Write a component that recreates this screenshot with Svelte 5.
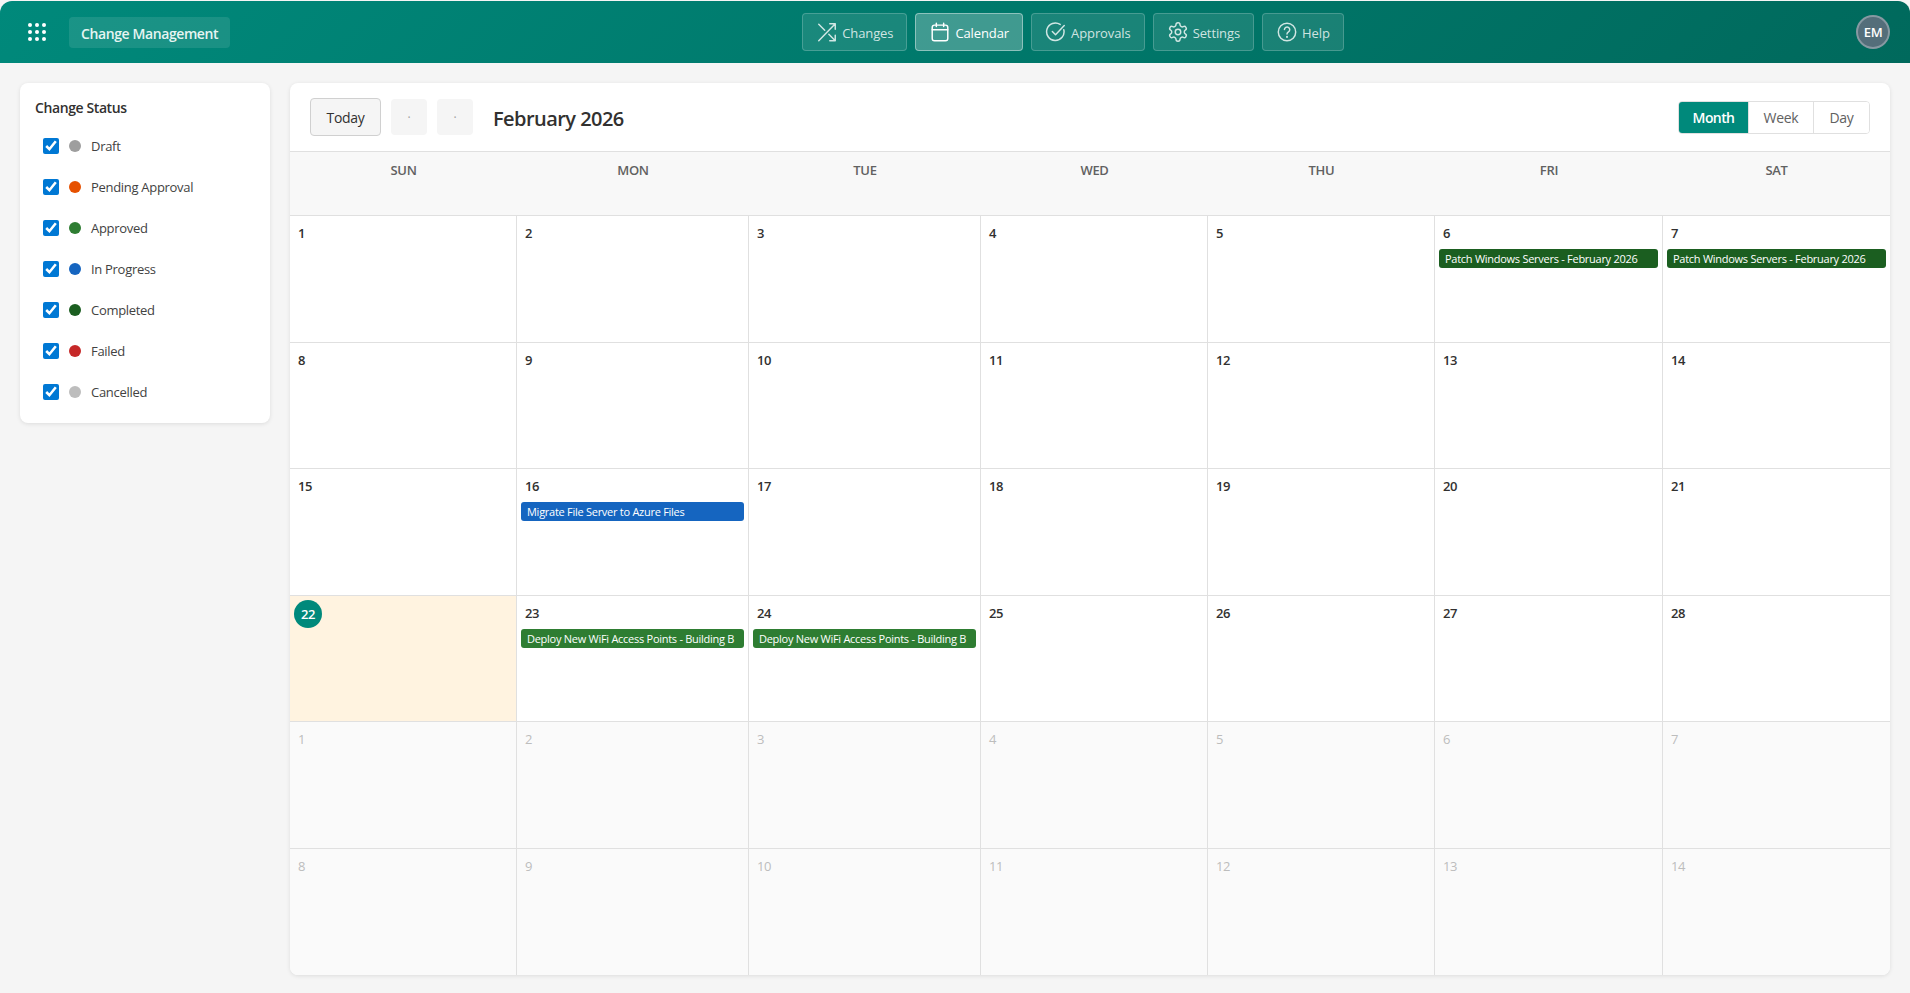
<script>
  const nav = [
    { label: "Changes", icon: "shuffle" },
    { label: "Calendar", icon: "calendar", active: true },
    { label: "Approvals", icon: "check" },
    { label: "Settings", icon: "gear" },
    { label: "Help", icon: "help" },
  ];

  const statuses = [
    { label: "Draft", color: "#9e9e9e" },
    { label: "Pending Approval", color: "#e65100" },
    { label: "Approved", color: "#2e7d32" },
    { label: "In Progress", color: "#1565c0" },
    { label: "Completed", color: "#1b5e20" },
    { label: "Failed", color: "#c62828" },
    { label: "Cancelled", color: "#bdbdbd" },
  ];

  const days = ["SUN", "MON", "TUE", "WED", "THU", "FRI", "SAT"];

  const patch = { title: "Patch Windows Servers - February 2026", color: "#1b5e20" };
  const wifi = { title: "Deploy New WiFi Access Points - Building B", color: "#2e7d32" };
  const migrate = { title: "Migrate File Server to Azure Files", color: "#1565c0" };
  const events = { 6: patch, 7: patch, 16: migrate, 23: wifi, 24: wifi };

  const cells = [];
  for (let d = 1; d <= 28; d++) cells.push({ day: d, event: events[d], today: d === 22 });
  for (let d = 1; d <= 14; d++) cells.push({ day: d, other: true });
</script>

<div class="app">
  <header class="topbar">
    <button class="waffle" aria-label="Apps">
      <svg width="18" height="18" viewBox="0 0 18 18" fill="#fff">
        {#each [2, 9, 16] as y}
          {#each [2, 9, 16] as x}
            <circle cx={x} cy={y} r="2" />
          {/each}
        {/each}
      </svg>
    </button>
    <div class="brand">Change Management</div>

    <nav class="nav">
      {#each nav as item}
        <button class="nav-btn" class:active={item.active}>
          <svg width="22" height="22" viewBox="0 0 24 24" fill="none" stroke="currentColor" stroke-width="1.6" stroke-linecap="round" stroke-linejoin="round">
            {#if item.icon === "shuffle"}
              <path d="M3 3.5 L9.5 10 M14 14.5 L21 21.5 M21 15.5 V21.5 H15 M3 21.5 L21 3 M15 3 H21 V9" />
            {:else if item.icon === "calendar"}
              <rect x="3.5" y="4.5" width="17" height="17" rx="2.5" />
              <path d="M3.5 9.5 H20.5 M8 2.5 V6 M16 2.5 V6" />
            {:else if item.icon === "check"}
              <path d="M20.5 9.5 A9.5 9.5 0 1 1 16.5 3.8" />
              <path d="M8 11.5 L11.5 15 L21 5" />
            {:else if item.icon === "gear"}
              <circle cx="12" cy="12" r="3" />
              <path d="M12.22 2h-.44a2 2 0 0 0-2 2v.18a2 2 0 0 1-1 1.73l-.43.25a2 2 0 0 1-2 0l-.15-.08a2 2 0 0 0-2.73.73l-.22.38a2 2 0 0 0 .73 2.73l.15.1a2 2 0 0 1 1 1.72v.51a2 2 0 0 1-1 1.74l-.15.09a2 2 0 0 0-.73 2.73l.22.38a2 2 0 0 0 2.73.73l.15-.08a2 2 0 0 1 2 0l.43.25a2 2 0 0 1 1 1.73V20a2 2 0 0 0 2 2h.44a2 2 0 0 0 2-2v-.18a2 2 0 0 1 1-1.73l.43-.25a2 2 0 0 1 2 0l.15.08a2 2 0 0 0 2.73-.73l.22-.39a2 2 0 0 0-.73-2.73l-.15-.08a2 2 0 0 1-1-1.74v-.5a2 2 0 0 1 1-1.74l.15-.09a2 2 0 0 0 .73-2.73l-.22-.38a2 2 0 0 0-2.73-.73l-.15.08a2 2 0 0 1-2 0l-.43-.25a2 2 0 0 1-1-1.73V4a2 2 0 0 0-2-2z" />
            {:else}
              <circle cx="12" cy="12" r="9.5" />
              <path d="M9.2 9.4 A2.9 2.9 0 1 1 13.6 11.9 C12.6 12.5 12 13 12 14.2" />
              <path d="M12 17.3 V17.4" stroke-width="2.2" />
            {/if}
          </svg>
          <span>{item.label}</span>
        </button>
      {/each}
    </nav>

    <div class="avatar">EM</div>
  </header>

  <main class="content">
    <aside class="sidebar">
      <h3>Change Status</h3>
      <ul>
        {#each statuses as s}
          <li>
            <input type="checkbox" checked />
            <span class="dot" style="background: {s.color}"></span>
            <span>{s.label}</span>
          </li>
        {/each}
      </ul>
    </aside>

    <section class="calendar">
      <div class="toolbar">
        <button class="today">Today</button>
        <button class="arrow">·</button>
        <button class="arrow">·</button>
        <h2>February 2026</h2>
        <div class="views">
          <button class="selected">Month</button>
          <button>Week</button>
          <button>Day</button>
        </div>
      </div>

      <div class="grid">
        {#each days as d}
          <div class="head">{d}</div>
        {/each}
        {#each cells as c}
          <div class="cell" class:other={c.other} class:today-cell={c.today}>
            <span class="num">{c.day}</span>
            {#if c.event}
              <div class="event" style="background: {c.event.color}">{c.event.title}</div>
            {/if}
          </div>
        {/each}
      </div>
    </section>
  </main>
</div>

<style>
  :global(body) {
    margin: 0;
    background: #f5f5f5;
    font-family: "Open Sans", "Noto Sans", sans-serif;
    color: #323130;
  }

  button {
    font-family: inherit;
    cursor: pointer;
  }

  .app {
    height: 100vh;
    display: flex;
    flex-direction: column;
    padding-top: 1px;
    box-sizing: border-box;
  }

  .topbar {
    height: 62px;
    flex: none;
    display: flex;
    align-items: center;
    padding: 0 20px 0 28px;
    background: linear-gradient(135deg, #00897b, #00695c);
    border-radius: 12px 12px 0 0;
    color: #fff;
  }

  .waffle {
    display: flex;
    padding: 0;
    background: none;
    border: none;
    margin: 0 23px 0 0;
  }

  .brand {
    height: 31px;
    line-height: 33px;
    padding: 0 12px;
    border-radius: 4px;
    background: rgba(255, 255, 255, 0.1);
    font-size: 14px;
    font-weight: 600;
    letter-spacing: -0.4px;
    color: #e6f5f2;
    white-space: nowrap;
  }

  .nav {
    display: flex;
    gap: 8px;
    margin-left: 572px;
  }

  .nav-btn {
    height: 38px;
    display: flex;
    align-items: center;
    gap: 4px;
    padding: 0 13px;
    border: 1px solid rgba(255, 255, 255, 0.2);
    border-radius: 4px;
    background: rgba(255, 255, 255, 0.1);
    color: rgba(255, 255, 255, 0.8);
    font-size: 13px;
    letter-spacing: -0.1px;
  }

  .nav-btn span {
    padding-top: 2px;
  }

  .nav-btn.active {
    background: rgba(255, 255, 255, 0.25);
    border-color: rgba(255, 255, 255, 0.4);
    color: #fff;
  }

  .avatar {
    margin-left: auto;
    width: 34px;
    height: 34px;
    box-sizing: border-box;
    display: flex;
    align-items: center;
    justify-content: center;
    border: 2px solid rgba(255, 255, 255, 0.3);
    border-radius: 50%;
    background: #546e7a;
    font-size: 13px;
    font-weight: 600;
    letter-spacing: -0.3px;
  }

  .content {
    flex: 1;
    min-height: 0;
    display: flex;
    align-items: flex-start;
    gap: 20px;
    padding: 20px 20px 18px;
  }

  .sidebar {
    width: 250px;
    flex: none;
    box-sizing: border-box;
    padding: 16px 15px 11px;
    background: #fff;
    border-radius: 8px;
    box-shadow: 0 1px 4px rgba(0, 0, 0, 0.1);
  }

  h3 {
    margin: 0 0 8px;
    font-size: 14px;
    line-height: 18px;
    font-weight: 600;
    letter-spacing: -0.4px;
  }

  ul {
    list-style: none;
    margin: 0;
    padding: 0 0 0 8px;
  }

  li {
    height: 41px;
    display: flex;
    align-items: center;
    font-size: 13px;
    letter-spacing: -0.3px;
    color: #424242;
  }

  input {
    width: 16px;
    height: 16px;
    margin: 0 10px 0 0;
    accent-color: #0078d4;
  }

  .dot {
    width: 12px;
    height: 12px;
    margin-right: 10px;
    border-radius: 50%;
  }

  .calendar {
    flex: 1;
    align-self: stretch;
    min-width: 0;
    display: flex;
    flex-direction: column;
    background: #fff;
    border-radius: 8px;
    overflow: hidden;
    box-shadow: 0 1px 4px rgba(0, 0, 0, 0.1);
  }

  .toolbar {
    height: 68px;
    flex: none;
    box-sizing: border-box;
    display: flex;
    align-items: center;
    padding: 0 20px;
  }

  .today {
    width: 71px;
    height: 38px;
    padding: 0;
    border: 1px solid #d0d0d0;
    border-radius: 4px;
    background: #f5f5f5;
    color: #323130;
    font-size: 14px;
    letter-spacing: -0.3px;
    margin-right: 10px;
  }

  .arrow {
    width: 36px;
    height: 36px;
    padding: 0;
    border: none;
    border-radius: 4px;
    background: #f5f5f5;
    color: #a0a0a0;
    font-size: 12px;
    margin-right: 10px;
  }

  h2 {
    margin: 2px 0 0 10px;
    font-size: 20px;
    font-weight: 600;
    letter-spacing: -0.55px;
    color: #323130;
  }

  .views {
    margin-left: auto;
    display: flex;
    height: 33px;
    box-sizing: border-box;
    border: 1px solid #e0e0e0;
    border-radius: 4px;
    overflow: hidden;
  }

  .views button {
    width: 65px;
    padding: 0;
    border: none;
    border-left: 1px solid #e0e0e0;
    background: #fff;
    color: #616161;
    font-size: 14px;
    letter-spacing: -0.3px;
  }

  .views button:first-child {
    width: 69px;
    border-left: none;
  }

  .views button:last-child {
    width: 56px;
  }

  .views .selected {
    background: #00897b;
    color: #fff;
    font-weight: 600;
    letter-spacing: -0.6px;
  }

  .grid {
    flex: 1;
    min-height: 0;
    display: grid;
    grid-template-columns: 227px 232px 232px 227px 227px 228px 227px;
    grid-template-rows: 64px repeat(6, minmax(0, 1fr));
    border-top: 1px solid #e0e0e0;
  }

  .head {
    padding-top: 9px;
    text-align: center;
    background: #f8f8f8;
    border-bottom: 1px solid #e0e0e0;
    font-size: 13px;
    line-height: 18px;
    font-weight: 550;
    letter-spacing: -0.3px;
    color: #616161;
  }

  .cell {
    box-sizing: border-box;
    min-width: 0;
    padding: 7px 4px 0;
    border-right: 1px solid #e0e0e0;
    border-bottom: 1px solid #e0e0e0;
  }

  .cell:nth-child(7n) {
    border-right: none;
  }

  .cell:nth-last-child(-n + 7) {
    border-bottom: none;
  }

  .num {
    display: block;
    padding-left: 4px;
    font-size: 13px;
    line-height: 20px;
    font-weight: 550;
    letter-spacing: -0.4px;
    color: #323130;
  }

  .other {
    background: #fafafa;
  }

  .other .num {
    color: #bdbdbd;
    font-weight: 400;
  }

  .today-cell {
    background: #fff3e0;
    padding-top: 4px;
  }

  .today-cell .num {
    width: 28px;
    height: 28px;
    padding: 0;
    line-height: 28px;
    text-align: center;
    border-radius: 50%;
    background: #00897b;
    color: #fff;
    font-weight: 600;
  }

  .event {
    margin-top: 6px;
    height: 19px;
    padding: 0 6px;
    border-radius: 3px;
    line-height: 19px;
    font-size: 11px;
    letter-spacing: -0.27px;
    color: #fff;
    white-space: nowrap;
    overflow: hidden;
  }
</style>
